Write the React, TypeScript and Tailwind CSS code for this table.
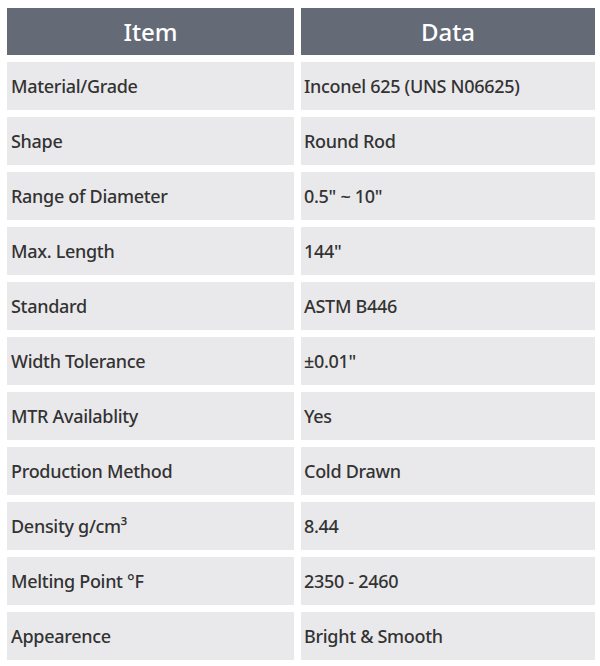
const rows: [string, string][] = [
  ['Material/Grade', 'Inconel 625 (UNS N06625)'],
  ['Shape', 'Round Rod'],
  ['Range of Diameter', '0.5" ~ 10"'],
  ['Max. Length', '144"'],
  ['Standard', 'ASTM B446'],
  ['Width Tolerance', '±0.01"'],
  ['MTR Availablity', 'Yes'],
  ['Production Method', 'Cold Drawn'],
  ['Density g/cm³', '8.44'],
  ['Melting Point °F', '2350 - 2460'],
  ['Appearence', 'Bright & Smooth'],
];

export default function App() {
  return (
    <div className="w-[600px] h-[666px] bg-white pt-2 px-[7px] font-['Noto_Sans',sans-serif]">
      <div className="grid grid-cols-[287px_294px] gap-[7px]">
        <div className="h-[47px] bg-[#646b77] text-white text-[24px] font-medium flex items-center justify-center">Item</div>
        <div className="h-[47px] bg-[#646b77] text-white text-[24px] font-medium flex items-center justify-center">Data</div>
        {rows.map(([k, v]) => (
          <>
            <div key={k} className="h-[48px] bg-[#e9e9eb] text-[#333] text-[18px] font-medium tracking-[-0.3px] flex items-center pl-1">{k}</div>
            <div key={k + 'v'} className="h-[48px] bg-[#e9e9eb] text-[#333] text-[18px] font-medium tracking-[-0.3px] flex items-center pl-[3px]">{v}</div>
          </>
        ))}
      </div>
    </div>
  );
}
